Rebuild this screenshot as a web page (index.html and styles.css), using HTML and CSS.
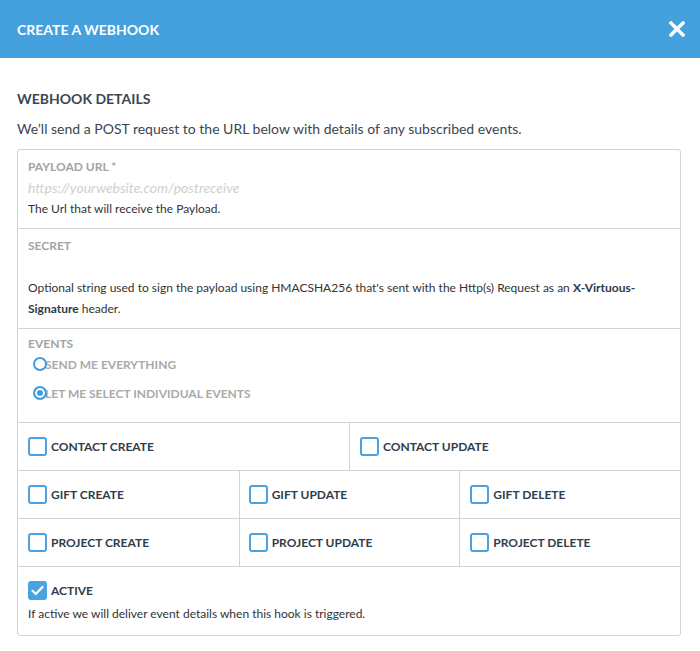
FILE: index.html
```html
<!DOCTYPE html>
<html>
<head>
<meta charset="utf-8">
<link rel="stylesheet" href="styles.css">
</head>
<body>
<header class="modal-header">
  <span class="modal-title">CREATE A WEBHOOK</span>
  <svg class="close" width="16" height="16" viewBox="0 0 16 16"><path d="M2 2 L14 14 M14 2 L2 14" stroke="#fff" stroke-width="3.4" stroke-linecap="square" fill="none"/></svg>
</header>
<main class="content">
  <h2 class="section-title">WEBHOOK DETAILS</h2>
  <p class="intro">We’ll send a POST request to the URL below with details of any subscribed events.</p>
  <div class="card">
    <div class="field">
      <div class="label">PAYLOAD URL *</div>
      <div class="placeholder">https://yourwebsite.com/postreceive</div>
      <div class="help">The Url that will receive the Payload.</div>
    </div>
    <div class="field">
      <div class="label">SECRET</div>
      <div class="empty"></div>
      <div class="help">Optional string used to sign the payload using HMACSHA256 that's sent with the Http(s) Request as an <b>X-Virtuous-</b><br><b>Signature</b> header.</div>
    </div>
    <div class="field events">
      <div class="label small">EVENTS</div>
      <div class="radios">
        <div class="radio-row"><span class="radio"></span><span class="radio-label">SEND ME EVERYTHING</span></div>
        <div class="radio-row"><span class="radio checked"></span><span class="radio-label">LET ME SELECT INDIVIDUAL EVENTS</span></div>
      </div>
    </div>
    <div class="grid two">
      <div class="cell"><span class="box"></span><span class="cb-label">CONTACT CREATE</span></div>
      <div class="cell"><span class="box"></span><span class="cb-label">CONTACT UPDATE</span></div>
    </div>
    <div class="grid three">
      <div class="cell"><span class="box"></span><span class="cb-label">GIFT CREATE</span></div>
      <div class="cell"><span class="box"></span><span class="cb-label">GIFT UPDATE</span></div>
      <div class="cell"><span class="box"></span><span class="cb-label">GIFT DELETE</span></div>
    </div>
    <div class="grid three">
      <div class="cell"><span class="box"></span><span class="cb-label">PROJECT CREATE</span></div>
      <div class="cell"><span class="box"></span><span class="cb-label">PROJECT UPDATE</span></div>
      <div class="cell"><span class="box"></span><span class="cb-label">PROJECT DELETE</span></div>
    </div>
    <div class="active">
      <div class="active-row"><span class="box checked"><svg width="19" height="19" viewBox="0 0 19 19"><path d="M4.5 9.8 L7.8 13 L14.5 6" stroke="#fff" stroke-width="2.2" fill="none" stroke-linecap="round" stroke-linejoin="round"/></svg></span><span class="cb-label">ACTIVE</span></div>
      <div class="help">If active we will deliver event details when this hook is triggered.</div>
    </div>
  </div>
</main>
</body>
</html>
```

FILE: styles.css
```css
* { box-sizing: border-box; }
body {
  margin: 0;
  font-family: Lato, "Open Sans", "Liberation Sans", sans-serif;
  background: #fff;
  color: #3a4650;
}
.modal-header {
  height: 58px;
  background: #44a1de;
  display: flex;
  align-items: center;
  justify-content: space-between;
  padding: 0 15px 0 17px;
}
.modal-title {
  color: #fff;
  font-size: 14px;
  font-weight: 700;
}
.close { display: block; }
.content {
  padding: 31px 19px 0 17px;
}
.section-title {
  margin: 0;
  font-size: 14px;
  line-height: 20px;
  font-weight: 700;
  color: #3b4753;
}
.intro {
  margin: 10px 0 10px;
  font-size: 14px;
  line-height: 20px;
  color: #3b4650;
}
.card {
  border: 1px solid #d3d3d3;
  border-radius: 3px;
}
.field {
  padding: 6px 10px 9px;
  border-bottom: 1px solid #d3d3d3;
}
.label {
  font-size: 12px;
  line-height: 21px;
  font-weight: 700;
  color: #a3a3a3;
}
.placeholder {
  font-size: 14px;
  line-height: 21px;
  font-style: italic;
  color: #cfcfcf;
}
.empty { height: 21px; }
.help {
  font-size: 12px;
  line-height: 21px;
  color: #333;
}
.help b { font-weight: 700; color: #2b3a48; }
.events { padding: 6px 10px 18px; }
.label.small { line-height: 18px; }
.radios {
  display: flex;
  flex-direction: column;
  gap: 7px;
}
.radio-row {
  display: flex;
  align-items: center;
  height: 22px;
}
.radio {
  width: 14px;
  height: 14px;
  border: 2px solid #3f9de0;
  border-radius: 50%;
  margin-left: 5px;
  position: relative;
  z-index: 1;
  flex: none;
}
.radio.checked {
  background: #3f9de0;
  box-shadow: inset 0 0 0 2px #fff;
}
.radio-label {
  margin-left: -2px;
  font-size: 12px;
  font-weight: 700;
  color: #a9a9a9;
}
.grid {
  display: grid;
  border-bottom: 1px solid #d3d3d3;
}
.grid.two { grid-template-columns: 1fr 1fr; }
.grid.three { grid-template-columns: 1fr 1fr 1fr; }
.cell {
  height: 47px;
  display: flex;
  align-items: center;
  padding-left: 10px;
  border-left: 1px solid #d3d3d3;
}
.cell:first-child { border-left: none; }
.grid.three .cell:nth-child(2) { padding-left: 9px; }
.box {
  width: 19px;
  height: 19px;
  border: 2px solid #4aa3df;
  border-radius: 3px;
  flex: none;
  display: block;
}
.box.checked {
  background: #4aa3df;
  border: none;
}
.box svg { display: block; }
.cb-label {
  margin-left: 4px;
  font-size: 12px;
  font-weight: 700;
  color: #2f3e4c;
}
.active {
  padding: 14px 10px 11px;
}
.active-row {
  display: flex;
  align-items: center;
  height: 19px;
  margin-bottom: 3px;
}
```
